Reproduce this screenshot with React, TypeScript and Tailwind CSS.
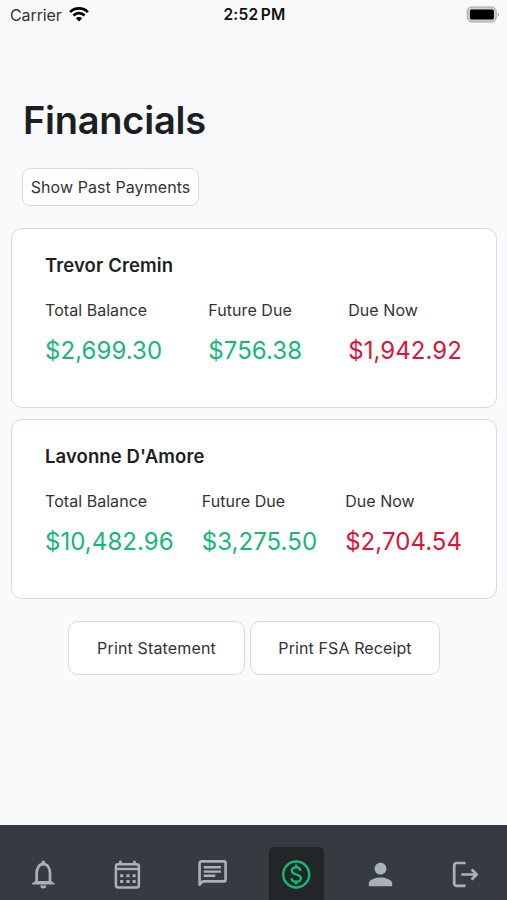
import React from 'react';
import { MdPerson } from 'react-icons/md';

interface Account {
  name: string;
  total: string;
  future: string;
  now: string;
}

const accounts: Account[] = [
  { name: 'Trevor Cremin', total: '$2,699.30', future: '$756.38', now: '$1,942.92' },
  { name: "Lavonne D'Amore", total: '$10,482.96', future: '$3,275.50', now: '$2,704.54' },
];

const BellIcon = () => (
  <svg width="34" height="34" viewBox="0 0 34 34" fill="none" stroke="currentColor" strokeWidth="2.7">
    <path d="M10.6 26v-9.6c0-5 2.4-9.2 6.7-9.2s6.7 4.2 6.7 9.2V26" />
    <path d="M15.5 6.8V5.4a1.8 1.8 0 0 1 3.6 0v1.4z" fill="currentColor" stroke="none" />
    <path d="M6.1 27.4v-1.2l3.5-2.3h15.4l3.5 2.3v1.2z" fill="currentColor" stroke="none" />
    <path d="M14.3 28.4h6a3 3 0 0 1-6 0z" fill="currentColor" stroke="none" />
  </svg>
);

const CalendarIcon = () => (
  <svg width="34" height="34" viewBox="0 0 34 34" fill="none" stroke="currentColor" strokeWidth="2.5">
    <rect x="5.9" y="7.2" width="23" height="23.2" rx="2.2" />
    <path d="M6 12h23" strokeWidth="2.4" />
    <path d="M10.4 3.7v4M24.4 3.7v4" strokeWidth="2.6" />
    <path d="M10.2 18.7h15.4M10.2 24.5h15.4" strokeWidth="3" strokeDasharray="3.1 3.1" />
  </svg>
);

const ChatIcon = () => (
  <svg width="34" height="34" viewBox="0 0 34 34" fill="none" stroke="currentColor" strokeWidth="2.6">
    <path d="M4.6 27.6V6a1.6 1.6 0 0 1 1.6-1.6H29A1.6 1.6 0 0 1 30.6 6v16.8a1.6 1.6 0 0 1-1.6 1.6H7.8z" strokeLinejoin="round" />
    <path d="M8.7 10.2h17.2M8.7 14.6h17.2M8.7 18.8h11.6" strokeWidth="2.4" />
  </svg>
);

const DollarIcon = () => (
  <svg width="34" height="34" viewBox="0 0 34 34" fill="none" stroke="currentColor" strokeWidth="2.4">
    <circle cx="17.2" cy="17.5" r="13" />
    <path d="M17.2 7.4v3M17.2 24.6v3" />
    <path d="M21.4 13.8c-.3-2.3-1.8-3.5-4.2-3.5-2.5 0-4.4 1.3-4.4 3.4 0 2 1.5 2.9 4.4 3.6 2.9.8 4.6 1.8 4.6 4 0 2.1-1.9 3.5-4.6 3.5s-4.5-1.4-4.7-3.7" />
  </svg>
);

const LogoutIcon = () => (
  <svg width="34" height="34" viewBox="0 0 34 34" fill="none" stroke="currentColor" strokeWidth="2.7">
    <path d="M17.6 6H8.4A2.2 2.2 0 0 0 6.2 8.2v18.4a2.2 2.2 0 0 0 2.2 2.2h9.2" />
    <path d="M13.2 17.5h15M23.6 12.4l5.1 5.1-5.1 5.1" />
  </svg>
);

const StatusBar = () => (
  <header className="flex h-8 items-center bg-[#f9f9f9] pb-[2px] pl-[10px] pr-[7px] text-black">
    <div className="flex flex-1 items-center gap-[7px]">
      <span className="text-[16px] tracking-[-0.1px] text-[#333]">Carrier</span>
      <svg className="-mt-px" width="20" height="15" viewBox="0 0 20 15" fill="none" stroke="black" strokeWidth="2.7">
        <path d="M1.1 5.1a12.7 12.7 0 0 1 17.8 0" />
        <path d="M4.4 8.5a8 8 0 0 1 11.2 0" />
        <path d="M10 14.6 6.8 11.3a4.6 4.6 0 0 1 6.4 0z" fill="black" stroke="none" />
      </svg>
    </div>
    <span className="mr-px text-[15.5px] font-semibold tracking-[0.25px] text-[#111] [word-spacing:-1.8px]">
      2:52 PM
    </span>
    <div className="flex flex-1 justify-end">
      <svg className="-mt-px" width="34" height="17" viewBox="0 0 34 17">
        <rect x="1.2" y="1" width="29" height="15" rx="4.5" fill="#d0d0d0" stroke="#a5a5a5" />
        <rect x="3.9" y="3.6" width="24" height="10" rx="1.5" fill="black" />
        <path d="M31.7 6.5a2.2 2.2 0 0 1 0 4z" fill="#aaa" />
      </svg>
    </div>
  </header>
);

const Amount = ({ label, value, due }: { label: string; value: string; due?: boolean }) => (
  <div>
    <div className="text-[16px] leading-6 tracking-[0.05px] text-[#333]">{label}</div>
    <div
      className={`mt-[11px] text-[24px] leading-9 tracking-[0.06px] ${
        due ? 'text-[#e01337]' : 'text-[#16b877]'
      }`}
    >
      {value}
    </div>
  </div>
);

const AccountCard = ({ account }: { account: Account }) => (
  <section className="h-[180.4px] rounded-[11px] border-[1.5px] border-[#d6d9dd] bg-white pl-[33px] pr-[34px] pt-[22.5px]">
    <h2 className="text-[18.5px] font-semibold leading-7 tracking-[0.1px] text-[#1d1f22]">
      {account.name}
    </h2>
    <div className="mt-[19px] flex justify-between">
      <Amount label="Total Balance" value={account.total} />
      <Amount label="Future Due" value={account.future} />
      <Amount label="Due Now" value={account.now} due />
    </div>
  </section>
);

const navItems = [
  { id: 'notifications', icon: <BellIcon /> },
  { id: 'calendar', icon: <CalendarIcon /> },
  { id: 'messages', icon: <ChatIcon /> },
  { id: 'financials', icon: <DollarIcon /> },
  { id: 'profile', icon: <MdPerson size={35} /> },
  { id: 'logout', icon: <LogoutIcon /> },
];

const BottomNav = ({ active }: { active: string }) => (
  <nav className="grid h-[75px] grid-cols-6 bg-[#363b42] pl-px pt-[22px]">
    {navItems.map((item) => (
      <a
        key={item.id}
        href={`#${item.id}`}
        className={`mx-auto flex h-[53px] w-[55px] justify-center rounded-t-[5px] pt-[10px] ${
          active === item.id ? 'bg-[#222629] text-[#16b877]' : 'text-[#abb1bb]'
        }`}
      >
        {item.icon}
      </a>
    ))}
  </nav>
);

const App: React.FC = () => (
  <div className="flex h-[900px] w-full flex-col overflow-hidden bg-[#f9fafc] font-['Inter',sans-serif]">
    <StatusBar />
    <main className="flex-1 pl-[11px] pr-[10px] pt-[64px]">
      <h1 className="pl-[12px] text-[38px] font-semibold leading-[48px] tracking-[-0.25px] text-[#1d1f22]">
        Financials
      </h1>
      <button className="ml-[11px] mt-[24px] block h-[38px] w-[177px] rounded-[8px] border-[1.5px] border-[#d6d9dd] bg-white text-[16px] tracking-[0.08px] text-[#333]">
        Show Past Payments
      </button>
      <div className="mt-[21.5px] flex flex-col gap-[11px]">
        {accounts.map((account) => (
          <AccountCard key={account.name} account={account} />
        ))}
      </div>
      <div className="mt-[22px] flex justify-center gap-[5px]">
        <button className="h-[54px] w-[177px] rounded-[10px] border-[1.5px] border-[#d6d9dd] bg-white text-[16px] tracking-[0.15px] text-[#333]">
          Print Statement
        </button>
        <button className="h-[54px] w-[190px] rounded-[10px] border-[1.5px] border-[#d6d9dd] bg-white text-[16px] tracking-[0.1px] text-[#333]">
          Print FSA Receipt
        </button>
      </div>
    </main>
    <BottomNav active="financials" />
  </div>
);

export default App;
